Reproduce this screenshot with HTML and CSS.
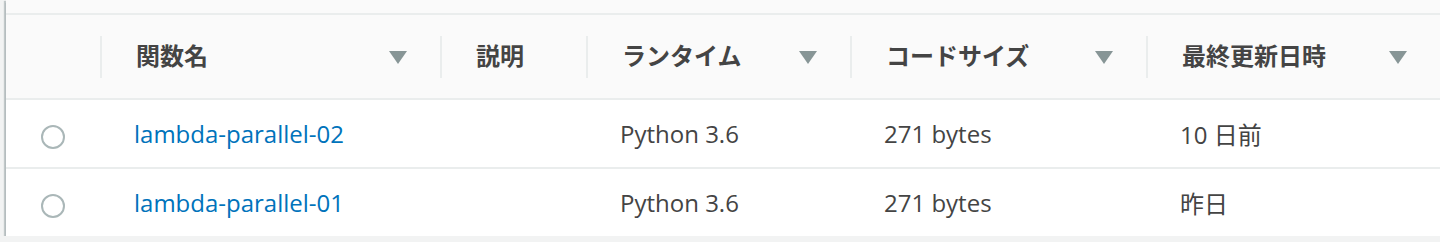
FILE: index.html
```html
<!DOCTYPE html>
<html lang="ja">
<head>
  <meta charset="UTF-8">
  <meta name="viewport" content="width=device-width, initial-scale=1.0">
  <title>Lambda 関数</title>
  <link rel="stylesheet" href="styles.css">
</head>
<body>
  <div class="card">
    <div class="toolbar"></div>

    <table class="functions">
      <colgroup>
        <col class="col-select">
        <col class="col-name">
        <col class="col-desc">
        <col class="col-runtime">
        <col class="col-size">
        <col class="col-date">
      </colgroup>
      <thead>
        <tr>
          <th></th>
          <th><div class="th-inner"><span class="label">関数名</span><span class="sort"></span></div></th>
          <th><div class="th-inner"><span class="label">説明</span></div></th>
          <th><div class="th-inner"><span class="label">ランタイム</span><span class="sort"></span></div></th>
          <th><div class="th-inner"><span class="label">コードサイズ</span><span class="sort"></span></div></th>
          <th><div class="th-inner"><span class="label">最終更新日時</span><span class="sort"></span></div></th>
        </tr>
      </thead>
      <tbody>
        <tr>
          <td class="select"><span class="radio"></span></td>
          <td><a href="#">lambda-parallel-02</a></td>
          <td></td>
          <td>Python 3.6</td>
          <td>271 bytes</td>
          <td>10 日前</td>
        </tr>
        <tr>
          <td class="select"><span class="radio"></span></td>
          <td><a href="#">lambda-parallel-01</a></td>
          <td></td>
          <td>Python 3.6</td>
          <td>271 bytes</td>
          <td>昨日</td>
        </tr>
      </tbody>
    </table>
  </div>
</body>
</html>
```

FILE: styles.css
```css
body {
  margin: 0;
  background-color: #f2f3f3;
  font-family: "Open Sans", "Noto Sans CJK JP", sans-serif;
  color: #444;
  overflow: hidden;
}
.card {
  margin-left: 6px;
  width: 1434px;
  background-color: #fff;
  box-shadow: 0 3px 1px 0 rgba(0, 28, 36, 0.35), -2px 1px 1px 0 rgba(0, 28, 36, 0.2);
}
.toolbar {
  height: 13px;
  background-color: #fafafa;
  border-bottom: 2px solid #eaeded;
}
.functions {
  width: 100%;
  border-collapse: collapse;
  table-layout: fixed;
}
.col-select { width: 94px; }
.col-name { width: 340px; }
.col-desc { width: 146px; }
.col-runtime { width: 264px; }
.col-size { width: 296px; }
.functions th {
  background-color: #fafafa;
  padding: 21px 0 20px;
  border-bottom: 2px solid #eaeded;
  text-align: left;
  font-family: "Noto Sans CJK JP", sans-serif;
  font-size: 24px;
  font-weight: bold;
  color: #444;
}
.th-inner {
  display: flex;
  align-items: center;
  justify-content: space-between;
  height: 42px;
  padding: 0 33px 0 34px;
  border-left: 2px solid #eaeded;
}
.label {
  line-height: 1;
  padding-bottom: 4px;
}
.sort {
  width: 0;
  height: 0;
  border-left: 9px solid transparent;
  border-right: 9px solid transparent;
  border-top: 13px solid #879596;
}
.functions td {
  height: 67px;
  padding: 0 0 0 34px;
  font-size: 24px;
  white-space: nowrap;
}
.functions tbody tr:first-child td {
  border-bottom: 2px solid #eaeded;
}
.functions td.select {
  padding: 0;
  text-align: center;
}
.radio {
  display: inline-block;
  width: 20px;
  height: 20px;
  border: 2px solid #aab7b8;
  border-radius: 50%;
  vertical-align: middle;
}
.functions a {
  color: #0073bb;
  text-decoration: none;
}
```
